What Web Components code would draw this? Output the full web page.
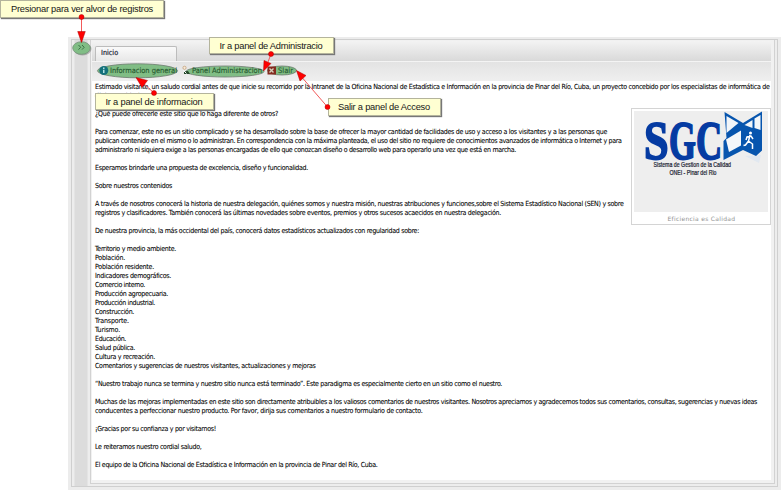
<!DOCTYPE html>
<html lang="es"><head><meta charset="utf-8"><title>Intranet</title>
<style>html,body{margin:0;height:100%;background:#fff;overflow:hidden}</style></head><body>
<intranet-page></intranet-page>
<script>
const define=(name,html,after)=>customElements.define(name,class extends HTMLElement{
  constructor(){super();this.attachShadow({mode:'open'})}
  connectedCallback(){this.shadowRoot.innerHTML=html;if(after)after(this)}
});
// A line of copy whose tracking is adjusted to fill a given width.
define('fit-line','<style>:host{display:block;white-space:pre;height:var(--lh,9px);line-height:var(--lh,9px)}span{display:inline-block}</style><span><slot></slot></span>',el=>{
  const s=el.shadowRoot.querySelector('span'),w=+el.getAttribute('w');
  if(w){const n=el.textContent.length;s.style.letterSpacing=((w-s.getBoundingClientRect().width)/n)+'px'}
});
define('side-rail',`<style>:host{display:block;width:14px;background:#dcdcdc;border:solid #e4e4e4;border-width:0 1px;box-sizing:border-box}</style>`);
define('tab-strip',`<style>:host{display:flex;align-items:flex-end;height:21px;padding-left:3px;background:linear-gradient(#f3f3f3,#d9d9d9);border-bottom:1px solid #f4f4f4;box-sizing:border-box}
div{box-sizing:border-box;width:82px;height:15px;border:1px solid #bcbcbc;border-bottom:0;border-radius:2px 2px 0 0;background:linear-gradient(#fafafa,#e7e7e7);padding:0 0 0 5px;font:7.200px/12px "DejaVu Sans Condensed","DejaVu Sans",sans-serif;color:#1d2838;-webkit-text-stroke:.2px #1d2838}</style><div><fit-line w="19" style="--lh:12px"><slot></slot></fit-line></div>`);
define('tool-bar',`<style>:host{display:block;height:19px;background:linear-gradient(#e3e3e3,#efefef);box-sizing:border-box;font:7.500px "DejaVu Sans Condensed","DejaVu Sans",sans-serif}
svg{display:block;width:240px;height:19px}</style><svg viewBox="91.500 62 240 19">
<g fill="#80bd85" stroke="#6c7b6e" stroke-width=".8"><ellipse cx="137" cy="70.800" rx="40" ry="7"/><ellipse cx="224.500" cy="71.500" rx="39" ry="5.500"/><ellipse cx="281.500" cy="70.500" rx="14.500" ry="4.500"/></g>
<circle cx="103.300" cy="70.500" r="4.500" fill="#13717b"/><path d="M102.500 69.700h1.500v3.400h-1.500zM102.500 67.600h1.500v1.300h-1.500z" fill="#b1dee0"/>
<circle cx="184" cy="67.800" r="1.600" fill="#f6ead8" stroke="#c09a70" stroke-width=".7"/><path d="M183.500 71.500l4-.5 2 3h-6z" fill="#24472a"/><path d="M183 70.500l3 3" stroke="#fff" stroke-width="1"/>
<path d="M267 66.500h8.500v8H267z" fill="#842b20"/><path d="M269 68.500l4 4m0-4l-4 4" stroke="#d6cfbb" stroke-width="1.400"/>
<g fill="#23562c" stroke="#23562c" stroke-width=".1"><text x="109.500" y="73.300" textLength="67">Informacion general</text><text x="191.500" y="73.300" textLength="70">Panel Administracion</text><text x="277.500" y="73.300" textLength="15">Slair</text></g></svg>`);
define('quality-card',`<style>:host{display:block;box-sizing:border-box;width:140px;height:117px;border:1px solid #d4d4d4;padding:2px;background:#fff}
svg{display:block}</style><svg width="134" height="111" viewBox="634 111 134 111"><path d="M634 111h134v101H634z" fill="#eee"/>
<g font-family="Liberation Serif,serif" font-weight="bold" fill="#053ba2" stroke="#053ba2" stroke-width="1.800"><text transform="translate(644 158.800) scale(.82 1)" font-size="54">S</text><text transform="translate(669 158.800) scale(.64 1)" font-size="54">G</text><text transform="translate(696 158.800) scale(.67 1)" font-size="54">C</text></g>
<path d="M745 156l14 7 2-8z" fill="#e1e8f0"/>
<path d="M724.500 112l18.500 11 19-11.500v39l-6 5.500-13-6-19.500 10v-19l3-3z" fill="#0755ae"/>
<path d="M726.500 116l12 7-12 10z" fill="#f1f5f9"/><path d="M744.500 125l8-5v8z" fill="#f1f5f9"/><path d="M742 121l12.500-8h-11l-1.500 3z" fill="#eee"/><path d="M754.500 118.500l6-3.500v15l-6-2z" fill="#f4f7fa"/><path d="M726 139.500l15-9v15l-12 6.500z" fill="#f4f7fa"/>
<circle cx="750.500" cy="133" r="1.500" fill="#fff"/><path d="M750 135l-1.500 6 4 3v5M748.500 141l-3 4-2 .5M746 140l1-3 4-1 2 3" stroke="#fff" stroke-width="1.500" fill="none"/>
<g font-family="Liberation Sans Narrow,Liberation Sans,sans-serif" font-size="6.300" fill="#171b30" stroke="#171b30" stroke-width=".2"><text x="653.500" y="167" textLength="77.500" lengthAdjust="spacingAndGlyphs">Sistema de Gestion de la Calidad</text><text x="669.500" y="175" textLength="47" lengthAdjust="spacingAndGlyphs">ONEI - Pinar del Rio</text></g>
<text x="667.500" y="220.500" textLength="67.500" font-family="DejaVu Sans,sans-serif" font-size="6" fill="#929292">Eficiencia es Calidad</text></svg>`);
define('article-copy',`<style>:host{display:block;flex:1;background:#fff;padding:2px 0 0 3px;font:7px "DejaVu Sans Condensed","DejaVu Sans",sans-serif;color:#000;-webkit-text-stroke:.08px #000;position:relative}i{display:block;height:9px}
quality-card{position:absolute;left:539px;top:27px;-webkit-text-stroke:0}</style><div id="t"></div><quality-card></quality-card>`,el=>{
 const L=[["Estimado visitante, un saludo cordial antes de que inicie su recorrido por la Intranet de la Oficina Nacional de Estadística e Información en la provincia de Pinar del Río, Cuba, un proyecto concebido por los especialistas de informática de",674.500],["dicha entidad.",47],0,["¿Qué puede ofrecerle este sitio que lo haga diferente de otros?",183],0,["Para comenzar, este no es un sitio complicado y se ha desarrollado sobre la base de ofrecer la mayor cantidad de facilidades de uso y acceso a los visitantes y a las personas que",512],["publican contenido en el mismo o lo administran. En correspondencia con la máxima planteada, el uso del sitio no requiere de conocimientos avanzados de informática o Internet y para",526.500],["administrarlo ni siquiera exige a las personas encargadas de ello que conozcan diseño o desarrollo web para operarlo una vez que está en marcha.",421],0,["Esperamos brindarle una propuesta de excelencia, diseño y funcionalidad.",213],0,["Sobre nuestros contenidos",77],0,["A través de nosotros conocerá la historia de nuestra delegación, quiénes somos y nuestra misión, nuestras atribuciones y funciones,sobre el Sistema Estadístico Nacional (SEN) y sobre",528.500],["registros y clasificadores. También conocerá las últimas novedades sobre eventos, premios y otros sucesos acaecidos en nuestra delegación.",406],0,["De nuestra provincia, la más occidental del país, conocerá datos estadísticos actualizados con regularidad sobre:",324],0,["Territorio y medio ambiente.",81],["Población.",30],["Población residente.",59],["Indicadores demográficos.",76],["Comercio interno.",50],["Producción agropecuaria.",73],["Producción industrial.",60],["Construcción.",39],["Transporte.",34],["Turismo.",25],["Educación.",31],["Salud pública.",40],["Cultura y recreación.",60],["Comentarios y sugerencias de nuestros visitantes, actualizaciones y mejoras",220.500],0,["\u201cNuestro trabajo nunca se termina y nuestro sitio nunca está terminado\u201d. Este paradigma es especialmente cierto en un sitio como el nuestro.",407],0,["Muchas de las mejoras implementadas en este sitio son directamente atribuibles a los valiosos comentarios de nuestros visitantes. Nosotros apreciamos y agradecemos todos sus comentarios, consultas, sugerencias y nuevas ideas",662],["conducentes a perfeccionar nuestro producto. Por favor, dirija sus comentarios a nuestro formulario de contacto.",327.500],0,["¡Gracias por su confianza y por visitarnos!",121],0,["Le reiteramos nuestro cordial saludo,",106.500],0,["El equipo de la Oficina Nacional de Estadística e Información en la provincia de Pinar del Río, Cuba.",282.500]];
 el.shadowRoot.querySelector('#t').innerHTML=L.map(l=>l?`<fit-line w="${l[1]}">${l[0]}</fit-line>`:'<i></i>').join('');
});
define('call-out',`<style>:host{position:absolute;box-sizing:border-box;background:#ffffd2;border:1px solid #b4b49c;box-shadow:1px 1px 1px #777;font:9.300px "Liberation Sans",sans-serif;color:#161616}</style><slot></slot>`);
define('pointer-layer',`<style>:host{position:absolute;inset:0}svg{display:block}</style><svg width="781" height="490">
<ellipse cx="82.500" cy="49" rx="9" ry="6.500" fill="#777" opacity=".5"/><ellipse cx="81.500" cy="48" rx="8.800" ry="6.300" fill="#80bd85" stroke="#75917a" stroke-width=".8"/><path d="M78.500 45l2.200 2.300-2.200 2.300M82 45l2.200 2.300-2.200 2.300" fill="none" stroke="#326a3d" stroke-width=".9"/>
<g stroke="#f25a5a" stroke-width="1" fill="none"><path d="M81.500 17v18M154 93l-12-11M271 54l-3 8M327.500 107l-25-29"/></g>
<g fill="#f00" stroke="#a80000" stroke-width=".5"><path d="M81.500 42.500l-3.800-11h7.600zM136 77.500l11.500 3-5.500 7zM263.500 71l.5-10.500 7 3zM296.500 70.500l9.500 5-6 5.500z"/><circle cx="81.500" cy="17" r="2.500"/><circle cx="154" cy="93" r="2.500"/><circle cx="271" cy="54" r="2.500"/><circle cx="327.500" cy="107" r="2.500"/></g></svg>`);
define('intranet-page',`<style>:host{display:block;position:relative;width:781px;height:490px;overflow:hidden}
.shell{box-sizing:border-box;margin-left:68px;height:490px;padding-top:37px}.outer{height:453px;background:#ececec;box-sizing:border-box;padding:2px 3px 3px}.frame{height:448px;border:1px solid #cfcfcf;background:#ededed;box-sizing:border-box;display:flex;padding-left:2px}
.main{margin:0 2px 2px 2px;flex:1;min-width:0;box-sizing:border-box;border:1px solid #d2d2d2;border-top:0;display:flex;flex-direction:column;background:#f1f1f1;padding:1px 3px 3px 1px}
</style><div class="shell"><div class="outer"><div class="frame"><side-rail></side-rail><div class="main"><tab-strip>Inicio</tab-strip><tool-bar></tool-bar><article-copy></article-copy></div></div></div></div>
<call-out style="left:0;top:0;width:164px;height:18px"><fit-line w="142" style="--lh:16px;padding-left:10px">Presionar para ver alvor de registros</fit-line></call-out>
<call-out style="left:95px;top:93px;width:119px;height:17px"><fit-line w="97" style="--lh:16px;padding-left:9.500px">Ir a panel de informacion</fit-line></call-out>
<call-out style="left:209px;top:37px;width:125px;height:17px"><fit-line w="103" style="--lh:16px;padding-left:9.500px">Ir a panel de Administracio</fit-line></call-out>
<call-out style="left:328px;top:98px;width:113px;height:18px"><fit-line w="92" style="--lh:17px;padding-left:9px">Salir a panel de Acceso</fit-line></call-out>
<pointer-layer></pointer-layer>`);
</script></body></html>
